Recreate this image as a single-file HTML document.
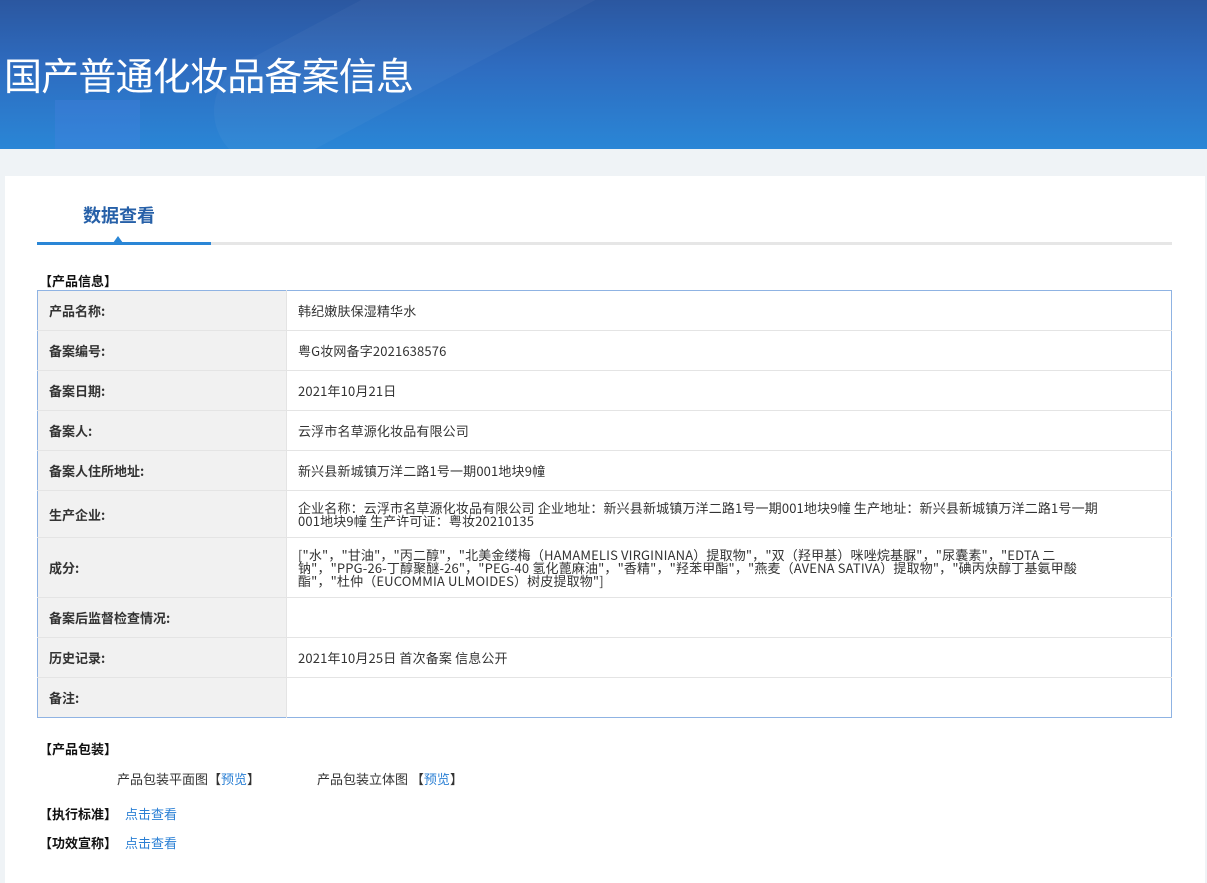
<!DOCTYPE html>
<html><head><meta charset="utf-8"><style>
*{margin:0;padding:0;box-sizing:border-box}
body{width:1207px;height:883px;background:#eff3f6;font-family:"Noto Sans CJK SC","Liberation Sans",sans-serif;font-size:13px;color:#333;overflow:hidden;position:relative}
.banner{height:149px;background:linear-gradient(180deg,#2b57a0 0%,#2e6cc0 45%,#2a86d6 100%);position:relative;overflow:hidden}
.banner h1{position:absolute;left:4px;top:51px;font-size:38px;font-weight:normal;color:#fff;letter-spacing:-0.8px;line-height:46px;font-family:"Noto Sans CJK SC",sans-serif}
.b1{position:absolute;left:190px;top:-40px;width:520px;height:110px;border-radius:55px;background:rgba(255,255,255,.035);transform:rotate(-28deg)}
.b2{position:absolute;left:55px;top:100px;width:85px;height:50px;background:rgba(80,130,230,.25)}
.card{position:absolute;left:5px;top:176px;width:1200px;height:707px;background:#fff}
.tab{position:absolute;left:78px;top:26px;font-size:18px;font-weight:bold;color:#2660a8}
.line{position:absolute;left:32px;top:66px;width:1135px;height:3px;background:#e6e6e6}
.line i{position:absolute;left:0;top:0;width:174px;height:3px;background:#2a86d6}
.tri{position:absolute;left:108px;top:60px;width:0;height:0;border-left:5px solid transparent;border-right:5px solid transparent;border-bottom:7px solid #2a86d6}
.sec{position:absolute;left:34px;font-weight:bold;color:#111;line-height:16px}
table{position:absolute;left:32px;top:114px;width:1135px;border-collapse:collapse;border:1px solid #8fb3e3}
td{border-bottom:1px solid #e4e4e4;vertical-align:middle;line-height:13px}
td.l{width:249px;background:#f1f1f1;font-weight:bold;padding-left:11px;border-right:1px solid #e4e4e4}
td.r{padding-left:11px;padding-right:62px;letter-spacing:0.15px}
a{color:#2a7fd4;text-decoration:none}
.t{position:absolute;line-height:16px}
</style></head><body>
<div class="banner"><div class="b1"></div><div class="b2"></div><h1>国产普通化妆品备案信息</h1></div>
<div class="card">
<div class="tab">数据查看</div>
<div class="line"><i></i></div><div class="tri"></div>
<div class="sec" style="top:97px">【产品信息】</div>
<table>
<tr style="height:40px"><td class="l">产品名称:</td><td class="r">韩纪嫩肤保湿精华水</td></tr>
<tr style="height:40px"><td class="l">备案编号:</td><td class="r">粤G妆网备字2021638576</td></tr>
<tr style="height:40px"><td class="l">备案日期:</td><td class="r">2021年10月21日</td></tr>
<tr style="height:40px"><td class="l">备案人:</td><td class="r">云浮市名草源化妆品有限公司</td></tr>
<tr style="height:40px"><td class="l">备案人住所地址:</td><td class="r">新兴县新城镇万洋二路1号一期001地块9幢</td></tr>
<tr style="height:47px"><td class="l">生产企业:</td><td class="r">企业名称：云浮市名草源化妆品有限公司 企业地址：新兴县新城镇万洋二路1号一期001地块9幢 生产地址：新兴县新城镇万洋二路1号一期<br>001地块9幢 生产许可证：粤妆20210135</td></tr>
<tr style="height:60px"><td class="l">成分:</td><td class="r">["水"，"甘油"，"丙二醇"，"北美金缕梅（HAMAMELIS VIRGINIANA）提取物"，"双（羟甲基）咪唑烷基脲"，"尿囊素"，"EDTA 二<br>钠"，"PPG-26-丁醇聚醚-26"，"PEG-40 氢化蓖麻油"，"香精"，"羟苯甲酯"，"燕麦（AVENA SATIVA）提取物"，"碘丙炔醇丁基氨甲酸<br>酯"，"杜仲（EUCOMMIA ULMOIDES）树皮提取物"]</td></tr>
<tr style="height:40px"><td class="l">备案后监督检查情况:</td><td class="r"></td></tr>
<tr style="height:40px"><td class="l">历史记录:</td><td class="r">2021年10月25日 首次备案 信息公开</td></tr>
<tr style="height:40px"><td class="l" style="border-bottom:none">备注:</td><td class="r" style="border-bottom:none"></td></tr>
</table>
<div class="sec" style="top:565px">【产品包装】</div>
<div class="t" style="left:112px;top:595px">产品包装平面图【<a>预览</a>】</div>
<div class="t" style="left:312px;top:595px">产品包装立体图 【<a>预览</a>】</div>
<div class="sec" style="top:630px">【执行标准】 <a style="font-weight:normal;margin-left:5px">点击查看</a></div>
<div class="sec" style="top:659px">【功效宣称】 <a style="font-weight:normal;margin-left:5px">点击查看</a></div>
</div>
</body></html>
